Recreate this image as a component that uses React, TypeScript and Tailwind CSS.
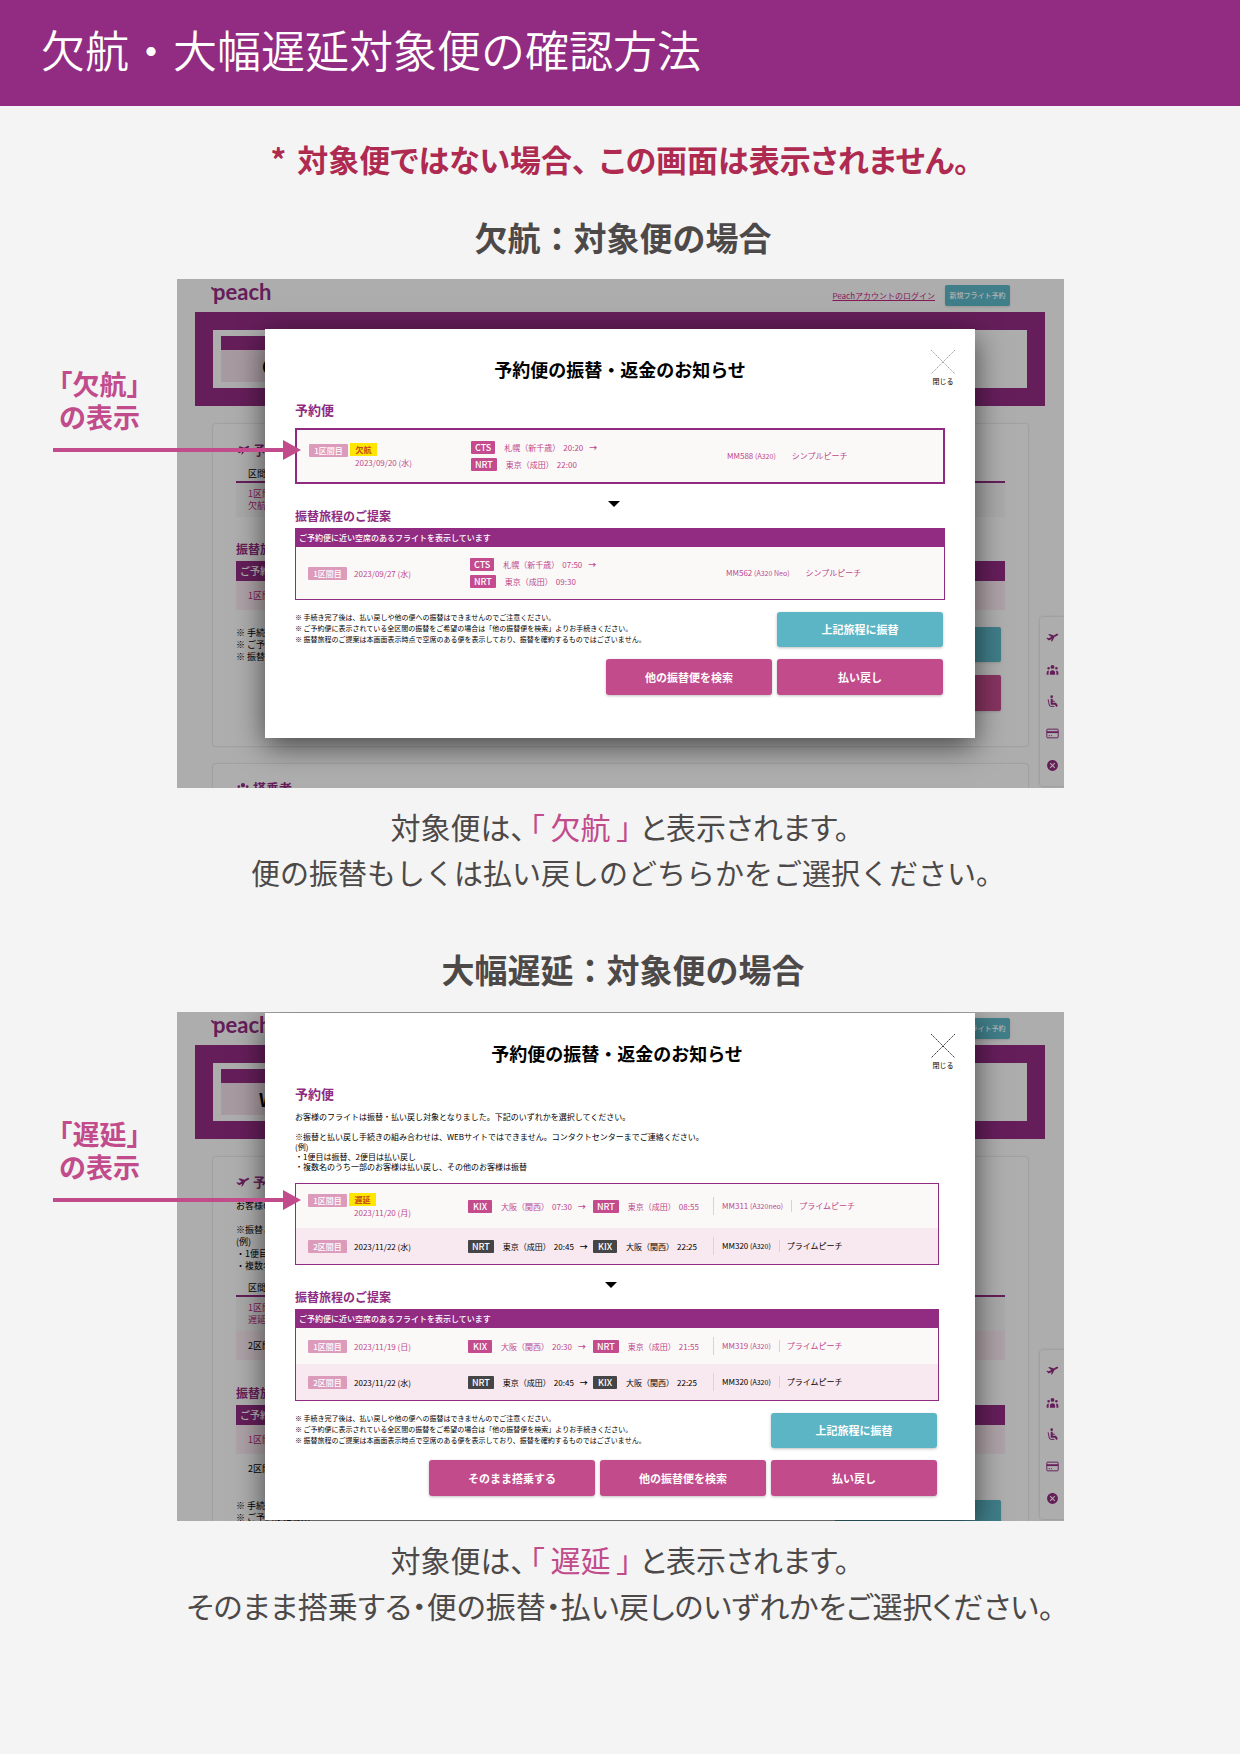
import type { ReactNode } from "react";
import clsx from "clsx";
import { HiUserGroup } from "react-icons/hi";
import { MdCancel } from "react-icons/md";

type Stop = { code: string; name: string; time: string };

type Leg = {
  no: string;
  status?: string;
  date: string;
  from: Stop;
  to: Stop;
  flight: string;
  aircraft: string;
  fare: string;
  changed: boolean;
};

const NOTES = [
  "※ 手続き完了後は、払い戻しや他の便への振替はできませんのでご注意ください。",
  "※ ご予約便に表示されている全区間の振替をご希望の場合は「他の振替便を検索」よりお手続きください。",
  "※ 振替旅程のご提案は本画面表示時点で空席のある便を表示しており、振替を確約するものではございません。",
];

const cancelledLeg: Leg = {
  no: "1区間目",
  status: "欠航",
  date: "2023/09/20 (水)",
  from: { code: "CTS", name: "札幌（新千歳）", time: "20:20" },
  to: { code: "NRT", name: "東京（成田）", time: "22:00" },
  flight: "MM588",
  aircraft: "(A320)",
  fare: "シンプルピーチ",
  changed: true,
};

const cancelledOffer: Leg = {
  no: "1区間目",
  date: "2023/09/27 (水)",
  from: { code: "CTS", name: "札幌（新千歳）", time: "07:50" },
  to: { code: "NRT", name: "東京（成田）", time: "09:30" },
  flight: "MM562",
  aircraft: "(A320 Neo)",
  fare: "シンプルピーチ",
  changed: true,
};

const returnLeg: Leg = {
  no: "2区間目",
  date: "2023/11/22 (水)",
  from: { code: "NRT", name: "東京（成田）", time: "20:45" },
  to: { code: "KIX", name: "大阪（関西）", time: "22:25" },
  flight: "MM320",
  aircraft: "(A320)",
  fare: "プライムピーチ",
  changed: false,
};

const delayedLeg: Leg = {
  no: "1区間目",
  status: "遅延",
  date: "2023/11/20 (月)",
  from: { code: "KIX", name: "大阪（関西）", time: "07:30" },
  to: { code: "NRT", name: "東京（成田）", time: "08:55" },
  flight: "MM311",
  aircraft: "(A320neo)",
  fare: "プライムピーチ",
  changed: true,
};

const delayedOffer: Leg = {
  no: "1区間目",
  date: "2023/11/19 (日)",
  from: { code: "KIX", name: "大阪（関西）", time: "20:30" },
  to: { code: "NRT", name: "東京（成田）", time: "21:55" },
  flight: "MM319",
  aircraft: "(A320)",
  fare: "プライムピーチ",
  changed: true,
};

function PlaneIcon({ className }: { className?: string }) {
  return (
    <svg viewBox="0 0 24 24" className={className} fill="currentColor" aria-hidden="true">
      <path
        transform="rotate(-14 12 11)"
        d="M23.5 8.800c-.3-1.200-1.500-1.900-2.700-1.600L15 8.800 8 4.200l-2.600.7 4.200 5.800-4.500 1.200-2.700-1.900-2 .5 3.400 5.400 5.800-1.500-2.600 4.600 3-.8 5.600-6.100 6-1.600c1.200-.3 1.900-.9 1.900-1.700z"
      />
    </svg>
  );
}

function SeatIcon({ className }: { className?: string }) {
  return (
    <svg viewBox="0 0 24 24" className={className} fill="none" stroke="currentColor" aria-hidden="true">
      <circle cx="10.5" cy="3" r="2.5" fill="currentColor" stroke="none" />
      <path d="M10.5 7V16H17.5L20.5 21" strokeWidth="3.6" />
      <path d="M10.5 11.5H16" strokeWidth="2" />
      <path d="M4 8L6 18.5Q6.5 21 9 21H15.5" strokeWidth="1.8" />
    </svg>
  );
}

function CardIcon({ className }: { className?: string }) {
  return (
    <svg viewBox="0 0 24 24" className={className} fill="none" stroke="currentColor" aria-hidden="true">
      <rect x="1.5" y="4" width="21" height="16" rx="1.5" strokeWidth="1.8" />
      <path d="M1.5 9.5H22.5" strokeWidth="3.4" />
      <path d="M5 16H7M9 16H11" strokeWidth="1.8" />
    </svg>
  );
}

function LegLabel({ leg }: { leg: Leg }) {
  return (
    <div className={clsx("flex gap-[2px]", leg.status ? "items-start" : "items-center")}>
      <span
        className={clsx(
          "w-[39px] rounded-[1px] bg-[#dc9bbb] text-center font-medium leading-[13px] text-white",
          leg.status && "mt-px"
        )}
      >
        {leg.no}
      </span>
      <div className="leading-[13px]">
        {leg.status && (
          <span className="block w-[27px] bg-[#ffe600] text-center font-bold text-[#c8481c]">{leg.status}</span>
        )}
        <span className="block pl-[5px]">{leg.date}</span>
      </div>
    </div>
  );
}

function StopItem({ stop, changed, arrow }: { stop: Stop; changed: boolean; arrow?: boolean }) {
  return (
    <span className="flex items-center leading-[13px]">
      <span
        className={clsx(
          "min-w-[24px] rounded-[1px] px-1 text-center text-[9px] font-medium text-white",
          changed ? "bg-[#c44b8d]" : "bg-[#454545]"
        )}
      >
        {stop.code}
      </span>
      <span className="ml-[9px]">{stop.name}</span>
      <span className="ml-[3px]">{stop.time}</span>
      {arrow && <span className="ml-[6px] font-bold">→</span>}
    </span>
  );
}

function StackedLeg({ leg }: { leg: Leg }) {
  return (
    <li className="flex h-[52px] items-center bg-[#faf9f8] pl-3 text-[#bf478b]">
      <div className="w-[162px]">
        <LegLabel leg={leg} />
      </div>
      <div className="flex w-[256px] flex-col gap-1">
        <StopItem stop={leg.from} changed arrow />
        <StopItem stop={leg.to} changed />
      </div>
      <span>
        {leg.flight} <span className="text-[7px]">{leg.aircraft}</span>
      </span>
      <span className="ml-4">{leg.fare}</span>
    </li>
  );
}

function InlineLeg({ leg }: { leg: Leg }) {
  return (
    <li
      className={clsx(
        "flex items-center pl-3",
        leg.status ? "h-11" : "h-9",
        leg.changed ? "bg-[#faf9f8] text-[#bf478b]" : "bg-[#f8e8ef] text-black"
      )}
    >
      <div className="w-[160px]">
        <LegLabel leg={leg} />
      </div>
      <div className="w-[125px]">
        <StopItem stop={leg.from} changed={leg.changed} arrow />
      </div>
      <div className="w-[120px]">
        <StopItem stop={leg.to} changed={leg.changed} />
      </div>
      <span className="border-l border-[#d8d4d6] py-[2px] pl-2 leading-[13px]">
        {leg.flight} <span className="text-[7px]">{leg.aircraft}</span>
      </span>
      <span className="ml-2 border-l border-[#d8d4d6] pl-[7px] leading-[12px]">{leg.fare}</span>
    </li>
  );
}

function ActionButton({ children, teal }: { children: ReactNode; teal?: boolean }) {
  return (
    <button
      type="button"
      className={clsx(
        "w-[166px] shrink-0 rounded-[3px] text-[11px] font-bold text-white shadow-[0_1px_3px_rgba(0,0,0,0.25)]",
        teal ? "h-[35px] bg-[#5cb5c5]" : "h-9 bg-[#c24b8c]"
      )}
    >
      {children}
    </button>
  );
}

function CloseButton({ faint }: { faint?: boolean }) {
  return (
    <button type="button" className="absolute right-5 top-[21px] flex flex-col items-center text-[7px] leading-[14px]">
      <svg
        viewBox="0 0 24 24"
        className={clsx("h-6 w-6", faint ? "text-[#8a8a8a]" : "text-black")}
        stroke="currentColor"
        strokeWidth="0.8"
        strokeDasharray="1.6 0.8"
        aria-hidden="true"
      >
        <path d="M0 0L24 24M24 0L0 24" />
      </svg>
      閉じる
    </button>
  );
}

function DownMark() {
  return (
    <div className="flex justify-center pr-3">
      <svg width="12" height="6" viewBox="0 0 12 6" aria-hidden="true">
        <path d="M0 0H12L6 6Z" />
      </svg>
    </div>
  );
}

function OfferHeading() {
  return (
    <>
      <h4 className="text-[12px] font-bold leading-[18px] text-[#8f2c82]">振替旅程のご提案</h4>
      <p className="mt-[3px] bg-[#912c82] pl-1 font-medium leading-[19px] text-white">
        ご予約便に近い空席のあるフライトを表示しています
      </p>
    </>
  );
}

function Notes() {
  return (
    <div className="whitespace-nowrap text-[7px] leading-[11px]">
      {NOTES.map((note) => (
        <p key={note}>{note}</p>
      ))}
    </div>
  );
}

function CancelDialog() {
  return (
    <div role="dialog" className="relative bg-white px-[30px] pb-[43px] pt-7 text-[8px] text-black shadow-[0_8px_28px_rgba(0,0,0,0.6)]">
      <CloseButton faint />
      <h3 className="text-center text-[18px] font-bold leading-6">予約便の振替・返金のお知らせ</h3>
      <h4 className="mt-[19px] text-[13px] font-bold leading-5 text-[#8f2c82]">予約便</h4>
      <ul className="mb-[17px] mt-2 border-2 border-[#8f2c82]">
        <StackedLeg leg={cancelledLeg} />
      </ul>
      <DownMark />
      <OfferHeading />
      <ul className="border border-t-0 border-[#8f2c82]">
        <StackedLeg leg={cancelledOffer} />
      </ul>
      <div className="mr-[2px] mt-3 flex items-start justify-between">
        <Notes />
        <ActionButton teal>上記旅程に振替</ActionButton>
      </div>
      <div className="mr-[2px] mt-3 flex justify-end gap-[5px]">
        <ActionButton>他の振替便を検索</ActionButton>
        <ActionButton>払い戻し</ActionButton>
      </div>
    </div>
  );
}

function DelayDialog() {
  return (
    <div role="dialog" className="relative bg-white pb-6 pl-[30px] pr-9 pt-7 text-[8px] text-black shadow-[0_8px_28px_rgba(0,0,0,0.6)]">
      <CloseButton />
      <h3 className="text-center text-[18px] font-bold leading-6">予約便の振替・返金のお知らせ</h3>
      <h4 className="mt-[19px] text-[13px] font-bold leading-5 text-[#8f2c82]">予約便</h4>
      <div className="mt-2 leading-[10px]">
        <p className="mb-[10px]">お客様のフライトは振替・払い戻し対象となりました。下記のいずれかを選択してください。</p>
        <p>※振替と払い戻し手続きの組み合わせは、WEBサイトではできません。コンタクトセンターまでご連絡ください。</p>
        <p>(例)</p>
        <p>・1便目は振替、2便目は払い戻し</p>
        <p>・複数名のうち一部のお客様は払い戻し、その他のお客様は振替</p>
      </div>
      <ul className="mb-[17px] mt-[11px] border border-[#8f2c82]">
        <InlineLeg leg={delayedLeg} />
        <InlineLeg leg={returnLeg} />
      </ul>
      <DownMark />
      <OfferHeading />
      <ul className="border border-t-0 border-[#8f2c82]">
        <InlineLeg leg={delayedOffer} />
        <InlineLeg leg={returnLeg} />
      </ul>
      <div className="mr-[2px] mt-3 flex items-start justify-between">
        <Notes />
        <ActionButton teal>上記旅程に振替</ActionButton>
      </div>
      <div className="mr-[2px] mt-3 flex justify-end gap-[5px]">
        <ActionButton>そのまま搭乗する</ActionButton>
        <ActionButton>他の振替便を検索</ActionButton>
        <ActionButton>払い戻し</ActionButton>
      </div>
    </div>
  );
}

function SideMenu() {
  const icons = [PlaneIcon, HiUserGroup, SeatIcon, CardIcon, MdCancel];
  return (
    <nav className="absolute right-0 top-[338px] flex w-6 flex-col items-center gap-[19px] rounded-l-[3px] bg-[#f8f8f8] py-[14px] text-[#912c82] shadow-[0_0_3px_rgba(0,0,0,0.2)]">
      {icons.map((Icon, i) => (
        <Icon key={i} className="h-[13px] w-[13px]" />
      ))}
    </nav>
  );
}

function CardTitle({ icon, children }: { icon: ReactNode; children: ReactNode }) {
  return (
    <h3 className="flex items-center gap-[3px] text-[13px] font-bold leading-5 text-[#912c82]">
      {icon}
      {children}
    </h3>
  );
}

// The booking page that sits dimmed behind the dialogs.
function BookingPage({ code, delayed }: { code: string; delayed?: boolean }) {
  return (
    <div className="h-0 min-h-full overflow-hidden bg-[#f8f8f8] text-[9px] text-black">
      <header className="flex h-[33px] items-start justify-between pl-9 pr-[54px]">
        <a href="#" className="relative pt-px font-['Lato','Liberation_Sans',sans-serif] text-[22px] font-bold leading-6 text-[#912c82]">
          <svg viewBox="0 0 4 4" className="absolute -left-[2px] top-2 h-1 w-1" fill="currentColor" aria-hidden="true">
            <path d="M0 0Q3 0 4 4Q0 3 0 0Z" />
          </svg>
          peach
        </a>
        <div className="flex items-center gap-[10px] pt-[6px]">
          <a href="#" className="text-[8px] text-[#c0267e] underline">Peachアカウントのログイン</a>
          <button type="button" className="h-[21px] w-[65px] rounded-[2px] bg-[#5cb5c5] text-[7px] font-medium text-white shadow-sm">
            新規フライト予約
          </button>
        </div>
      </header>

      <div className="ml-[18px] mr-[19px] border-[18px] border-[#912c82] bg-[#f8f8f8] px-2 py-[6px]">
        <div className="w-[150px] bg-[#efdde5]">
          <div className="h-[14px] bg-[#912c82]" />
          <p className={clsx("text-[18px] font-bold leading-8", delayed ? "pl-[38px]" : "pl-[41px]")}>{code}</p>
        </div>
      </div>

      <div
        className={clsx(
          "mx-9 rounded-[2px] bg-[#f9f9f9] px-[23px] shadow-[0_0_2px_rgba(0,0,0,0.25)]",
          delayed ? "mt-[18px] pb-[70px] pt-[15px]" : "mt-[18px] pb-[35px] pt-4"
        )}
      >
        <CardTitle icon={<PlaneIcon className="h-[14px] w-[14px]" />}>予約便</CardTitle>
        {delayed && (
          <div className="mt-2 whitespace-nowrap pb-1 leading-[12px]">
            <p className="mb-3">お客様のフライトは振替・払い戻し対象となりました。</p>
            <p>※振替と払い戻し手続きの組み合わせは、できません。</p>
            <p>(例)</p>
            <p>・1便目は振替</p>
            <p>・複数名のうち一部のお客様は払い戻し</p>
          </div>
        )}
        <table className={clsx("w-full text-left", delayed ? "mt-[5px]" : "mt-[7px]")}>
          <thead>
            <tr className="border-b-2 border-[#912c82]">
              <th className="pl-3 font-normal leading-[14px]">区間</th>
            </tr>
          </thead>
          <tbody>
            <tr className="bg-[#f4f2f3] text-[#c0267e]">
              <td className="py-[5px] pl-3 leading-[12px]">
                1区間目
                <br />
                {delayed ? "遅延" : "欠航"}
              </td>
            </tr>
            {delayed && (
              <tr className="bg-[#f8e8ef]">
                <td className="pl-3 leading-[29px]">2区間目</td>
              </tr>
            )}
          </tbody>
        </table>
        <h4 className={clsx("text-[12px] font-bold leading-[16px] text-[#912c82]", delayed ? "mt-[25px]" : "mt-6")}>
          振替旅程のご提案
        </h4>
        <p className="mt-1 bg-[#912c82] pl-1 text-[10px] font-medium leading-5 text-white">ご予約便に近い空席のあるフライト</p>
        <p className="bg-[#f8e8ef] pl-3 leading-[29px] text-[#c0267e]">1区間目</p>
        {delayed && <p className="pl-3 leading-[29px]">2区間目</p>}
        <div className="mt-[17px] flex items-start justify-between pr-1">
          <div className="whitespace-nowrap leading-[12px]">
            <p>※ 手続き完了後は</p>
            <p>※ ご予約便に表示</p>
            <p>※ 振替旅程のご提案は</p>
          </div>
          <div className="flex flex-col gap-[13px]">
            <div className="h-[35px] w-[166px] rounded-[2px] bg-[#5cb5c5] shadow-sm" />
            <div className="h-9 w-[166px] rounded-[2px] bg-[#c24b8c] shadow-sm" />
          </div>
        </div>
      </div>

      <div className="mx-9 mt-[18px] rounded-[2px] bg-[#f9f9f9] px-[23px] pb-6 pt-[14px] shadow-[0_0_2px_rgba(0,0,0,0.25)]">
        <CardTitle icon={<HiUserGroup className="h-[14px] w-[14px]" />}>搭乗者</CardTitle>
      </div>
    </div>
  );
}

function Callout({ word, className }: { word: string; className: string }) {
  return (
    <div className={clsx("absolute -left-[124px] w-[248px] text-[#c24b8c]", className)}>
      <p className="pl-[6px] text-[27px] font-bold leading-[33px] [font-feature-settings:'halt']">
        「{word}」
        <br />
        の表示
      </p>
      <svg width="248" height="20" viewBox="0 0 248 20" className="mt-[7px]" fill="currentColor" aria-hidden="true">
        <path d="M0 8H230V0L248 10L230 20V12H0Z" />
      </svg>
    </div>
  );
}

function Shot({ background, dialog, callout, inset }: { background: ReactNode; dialog: ReactNode; callout: ReactNode; inset: string }) {
  return (
    <div className="relative ml-[177px] mr-[176px] text-left">
      <div className="relative grid overflow-hidden">
        <div className="relative col-start-1 row-start-1 grid">
          {background}
          <SideMenu />
          <div className="absolute inset-0 bg-black/30" />
        </div>
        <div className={clsx("relative col-start-1 row-start-1 ml-[88px] mr-[89px]", inset)}>{dialog}</div>
      </div>
      {callout}
    </div>
  );
}

function Caption({ word, children }: { word: string; children: ReactNode }) {
  return (
    <div className="mt-[15px] pb-px leading-[46px]">
      <p className="text-[30px] [font-feature-settings:'palt']">
        対象便は、
        <span className="ml-1 text-[#c24b8c]">
          「<span className="mx-[6px]">{word}</span>」
        </span>
        <span className="ml-2">と表示されます。</span>
      </p>
      {children}
    </div>
  );
}

export default function App() {
  return (
    <div className="min-h-screen bg-[#f4f4f4] font-['Noto_Sans_CJK_JP',sans-serif] text-[#4c4948]">
      <header className="bg-[#912c82] px-[41px] pb-[25px] pt-[17px]">
        <h1 className="text-[44px] font-[350] leading-[64px] text-white">欠航・大幅遅延対象便の確認方法</h1>
      </header>

      <main className="pb-16 pt-[30px] text-center">
        <p className="text-[31px] font-bold leading-[46px] text-[#ae2a50] [font-feature-settings:'palt']">
          <span className="mr-1">*</span> 対象便ではない場合、
          <span className="ml-3">この画面は表示されません。</span>
        </p>

        <section>
          <h2 className="mb-[17px] mt-[30px] pl-[6px] text-[33px] font-bold leading-[50px]">欠航：対象便の場合</h2>
          <Shot
            background={<BookingPage code="C" />}
            dialog={<CancelDialog />}
            callout={<Callout word="欠航" className="top-[88px]" />}
            inset="my-[50px]"
          />
          <Caption word="欠航">
            <p className="pl-4 text-[29px]">便の振替もしくは払い戻しのどちらかをご選択ください。</p>
          </Caption>
        </section>

        <section>
          <h2 className="mb-[18px] mt-12 pl-[6px] text-[33px] font-bold leading-[50px]">大幅遅延：対象便の場合</h2>
          <Shot
            background={<BookingPage code="W" delayed />}
            dialog={<DelayDialog />}
            callout={<Callout word="遅延" className="top-[105px]" />}
            inset="my-px"
          />
          <Caption word="遅延">
            <p className="text-[30px] [font-feature-settings:'palt']">
              そのまま搭乗する・便の振替・払い戻しのいずれかをご選択ください。
            </p>
          </Caption>
        </section>
      </main>
    </div>
  );
}
